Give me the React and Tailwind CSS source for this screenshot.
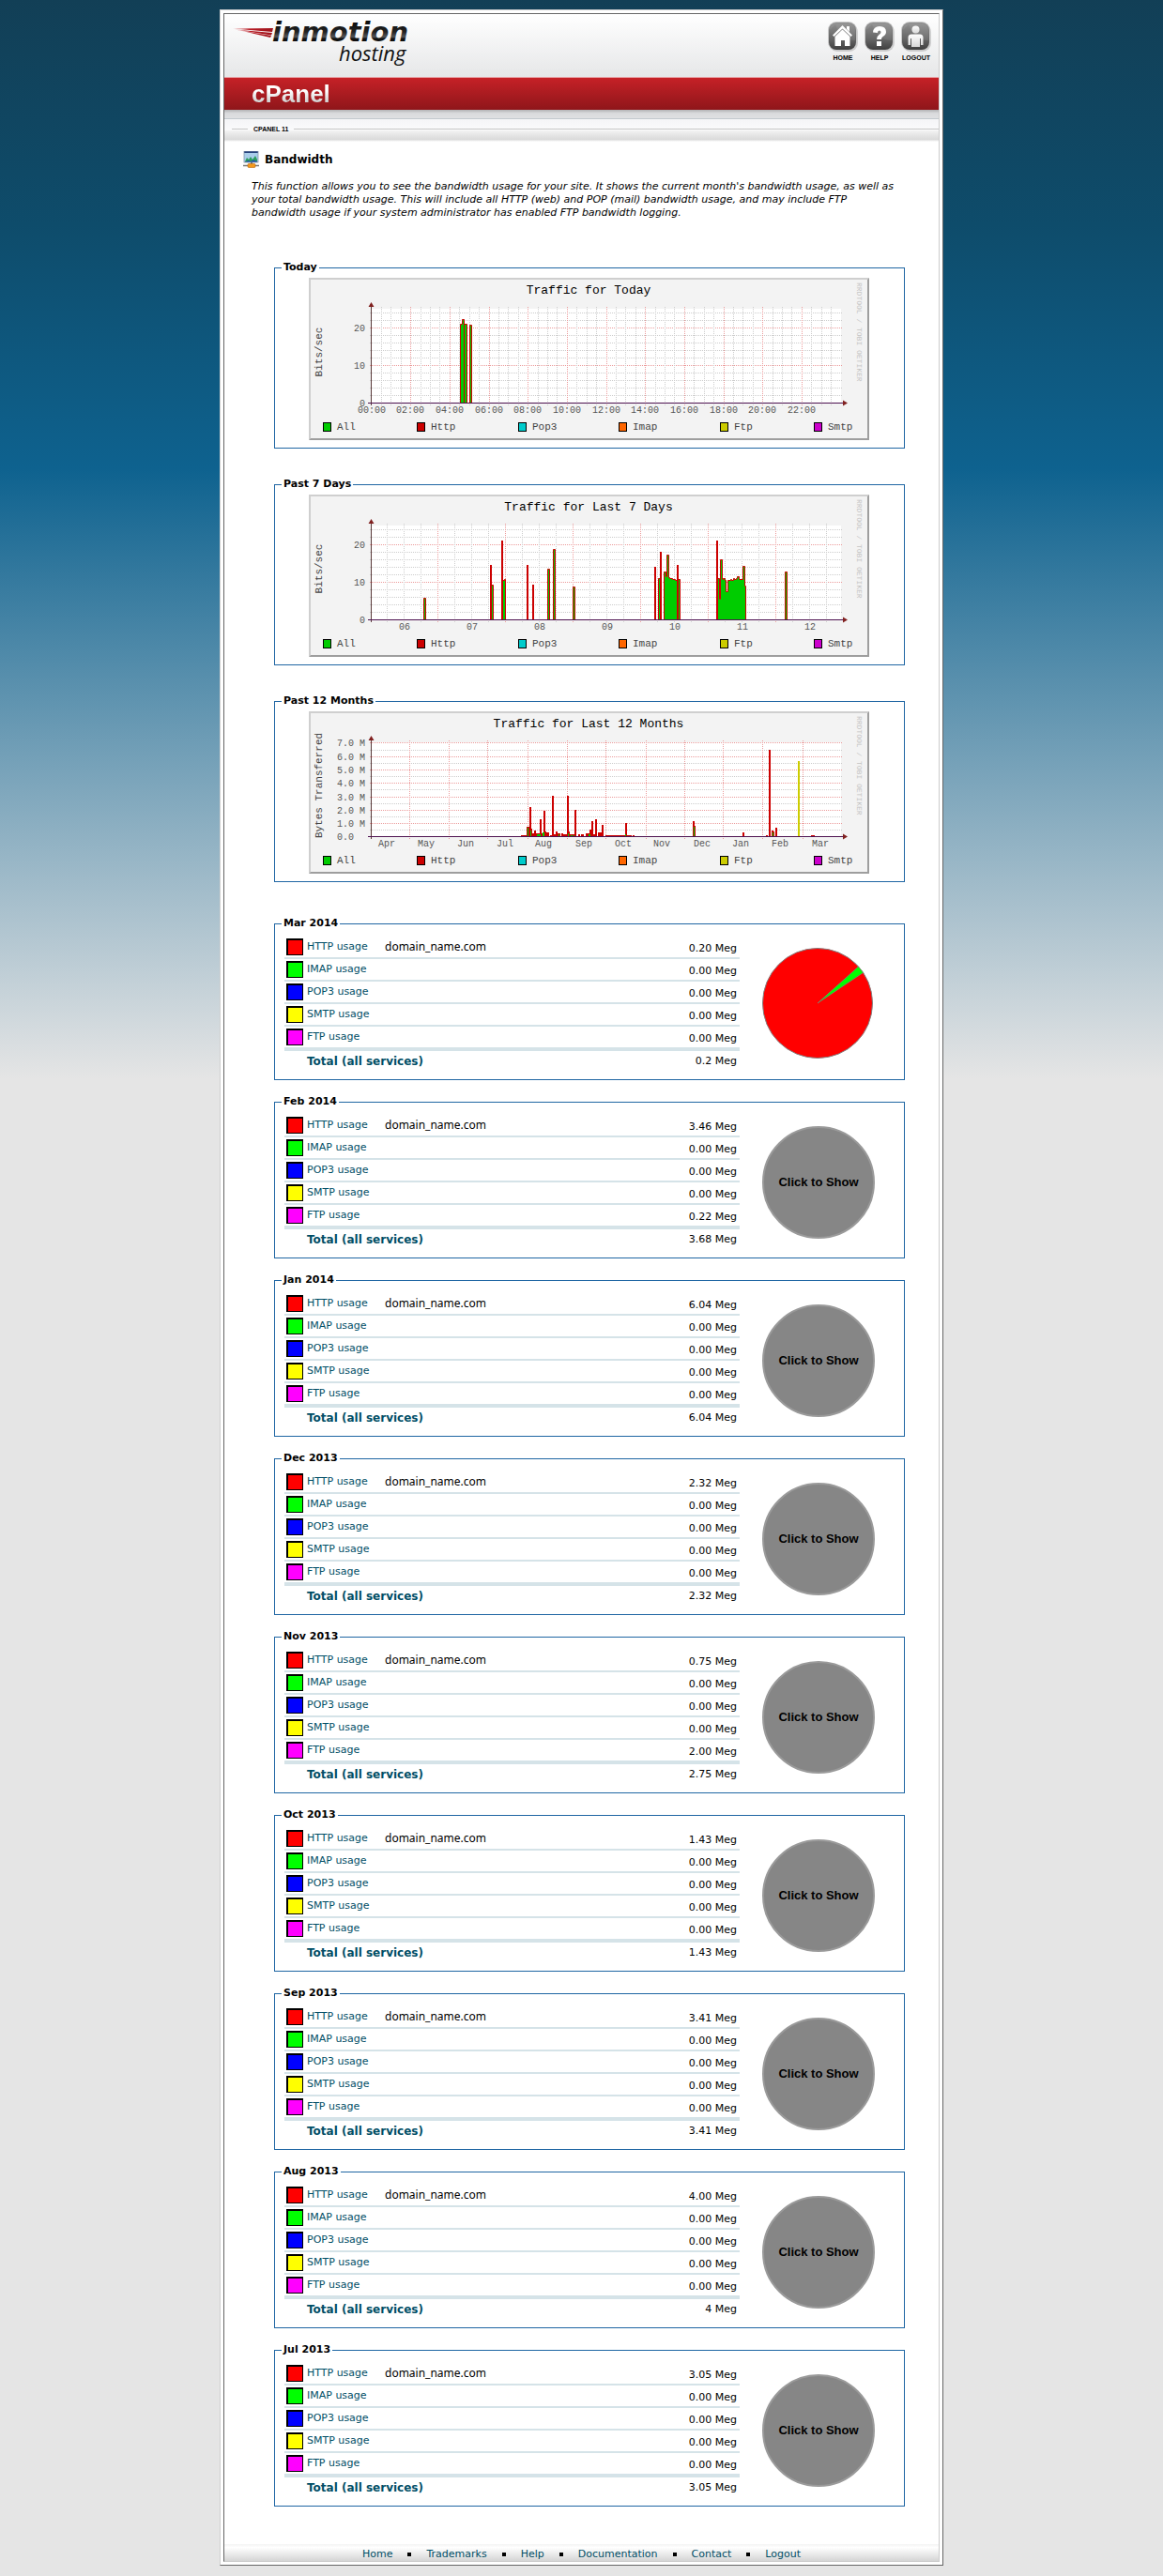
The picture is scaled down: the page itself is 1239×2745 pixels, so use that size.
import React from "react";

const SANS = "font-['DejaVu_Sans',Verdana,sans-serif]";

/* ---------- header artwork ---------- */

function Logo() {
  return (
    <svg viewBox="0 0 195 66" className="block h-[66px] w-[195px]" role="img" aria-label="InMotion Hosting">
      <defs>
        <linearGradient id="word" x1="0" y1="0" x2="0" y2="1">
          <stop offset="0" stopColor="#000" />
          <stop offset="0.5" stopColor="#222" />
          <stop offset="0.65" stopColor="#555" />
          <stop offset="0.72" stopColor="#111" />
          <stop offset="1" stopColor="#000" />
        </linearGradient>
        <linearGradient id="streak" x1="0" y1="0" x2="1" y2="0">
          <stop offset="0" stopColor="#c9202a" stopOpacity="0.35" />
          <stop offset="0.4" stopColor="#b81c25" />
          <stop offset="1" stopColor="#a0141c" />
        </linearGradient>
      </defs>
      <path d="M0 15.500 L43 15 L42 19 Z" fill="url(#streak)" />
      <path d="M2 16.500 L42 20 L41 22.500 Z" fill="url(#streak)" />
      <path d="M8 17.500 L41 23 L40 25 Z" fill="url(#streak)" />
      <text x="42" y="29" fontFamily="DejaVu Sans, sans-serif" fontWeight="700" fontStyle="italic" fontSize="29" fill="url(#word)">inmotion</text>
      <text x="113" y="50" fontFamily="Open Sans, sans-serif" fontWeight="400" fontStyle="italic" fontSize="22" fill="#111">hosting</text>
    </svg>
  );
}

function Tile({ children }) {
  return (
    <svg viewBox="0 0 32 32" className="block size-8" aria-hidden="true">
      <defs>
        <linearGradient id="tile" x1="0" y1="0" x2="0" y2="1">
          <stop offset="0" stopColor="#8f8f8f" />
          <stop offset="0.6" stopColor="#666" />
          <stop offset="1" stopColor="#3f3f3f" />
        </linearGradient>
        <linearGradient id="glyph" x1="0" y1="0" x2="0" y2="1">
          <stop offset="0" stopColor="#fff" />
          <stop offset="1" stopColor="#d8d8d8" />
        </linearGradient>
      </defs>
      <rect x="1" y="2" width="31" height="30" rx="9" fill="#000" opacity="0.15" />
      <rect x="0" y="0" width="31" height="31" rx="9" fill="#c9c9c9" />
      <rect x="1" y="1" width="29" height="29" rx="8" fill="url(#tile)" />
      <path d="M2 9 Q2 2 9 2 H22 Q29 2 29 9 V20 Q14 20 8 3 Z" fill="#fff" opacity="0.08" />
      {children}
    </svg>
  );
}

function HomeGlyph() {
  return (
    <Tile>
      <path d="M20 5 h3 v6 l-3 -3 Z" fill="#fff" />
      <path d="M15.500 4 L26 14.500 L24.500 16 L15.500 7.500 L6.500 16 L5 14.500 Z" fill="#fff" />
      <path d="M15.500 8.500 L23.500 16 V26 H18 V20 H14 V26 H7.500 V16 Z" fill="#fff" />
    </Tile>
  );
}

function HelpGlyph() {
  return (
    <Tile>
      <path d="M9 11.500 Q9.500 5 16 5 Q23 5 23 11 Q23 14 19.500 16 Q18 17 18 19 H13 Q13 15.500 15.500 14 Q17.500 12.800 17.500 11.300 Q17.500 9.500 15.800 9.500 Q14 9.500 13.800 12 Z" fill="#fff" />
      <rect x="13" y="21" width="5" height="5" fill="#fff" />
    </Tile>
  );
}

function UserGlyph() {
  return (
    <Tile>
      <circle cx="15.500" cy="8.500" r="4" fill="url(#glyph)" />
      <path d="M7.500 17 Q7.500 13.500 11 13.500 H20 Q23.500 13.500 23.500 17 V25 H21 V18 H20 V27 H11 V18 H10 V25 H7.500 Z" fill="url(#glyph)" />
    </Tile>
  );
}

function BandwidthIcon() {
  return (
    <svg viewBox="0 0 18 18" className="size-[18px]" aria-hidden="true">
      <rect x="1" y="0" width="15" height="12" fill="#a9cdea" />
      <rect x="1" y="0" width="15" height="2" fill="#27437d" />
      <path d="M2 11 L4 7 L6 9 L8 6 L10 9 L13 5 L15 9 V12 H2 Z" fill="#2a9d5c" />
      <path d="M2 12 L5 10 L8 11 L11 9.500 L15 11 V12 Z" fill="#1c4fa8" />
      <rect x="1" y="0" width="15" height="12" fill="none" stroke="#8494ab" strokeWidth="0.800" />
      <rect x="8" y="12" width="2" height="3" fill="#777" />
      <path d="M0 15.500 H17" stroke="#777" strokeWidth="1.500" />
      <rect x="5" y="13.500" width="8" height="4" rx="1" fill="#f59a1c" stroke="#b96a10" strokeWidth="0.600" />
    </svg>
  );
}

/* ---------- traffic charts ---------- */

const LEFT = 66.5;
const BASE = 133.5;
const MONO = "Liberation Mono, monospace";
const SERIES = [
  { name: "All", color: "#00cc00", x: 15 },
  { name: "Http", color: "#cc0000", x: 115 },
  { name: "Pop3", color: "#00cccc", x: 223 },
  { name: "Imap", color: "#ff6600", x: 330 },
  { name: "Ftp", color: "#cccc00", x: 438 },
  { name: "Smtp", color: "#cc00cc", x: 538 },
];

function Chart({ title, unit, rows, cols, labels, children }) {
  return (
    <svg viewBox="0 0 597 173" className="block h-auto w-full" role="img" aria-label={title}>
      <rect width="597" height="173" fill="#f3f3f3" />
      <path d="M0 0 H597 L595 2 H2 V171 L0 173 Z" fill="#cfcfcf" />
      <path d="M597 0 V173 H0 L2 171 H595 V2 Z" fill="#9e9e9e" />
      <rect x="66" y="33" width="501" height="101" fill="#fff" />
      <text x="298" y="17" textAnchor="middle" fontFamily={MONO} fontSize="13" fill="#000">{title}</text>
      <text transform="translate(14 79) rotate(-90)" textAnchor="middle" fontFamily={MONO} fontSize="11" fill="#444">{unit}</text>
      <text transform="translate(567 5) rotate(90)" y="-17" fontFamily={MONO} fontSize="8" fill="#c4c4c4">RRDTOOL / TOBI OETIKER</text>
      <g strokeWidth="1" strokeDasharray="1 1">
        {rows.map((r) => (
          <path key={r.y} d={`M65 ${r.y} H569`} stroke={r.major ? "#ec9c9c" : "#cdcdcd"} />
        ))}
        {cols.map((c) => (
          <path key={c.x} d={`M${c.x} 31 V136`} stroke={c.major ? "#ec9c9c" : "#cdcdcd"} />
        ))}
      </g>
      {children}
      <path d={`M${LEFT} 30 V136`} stroke="#5a3a3a" />
      <path d={`M63 ${BASE} H570`} stroke="#4d1250" />
      <path d="M66.500 26 L69.500 31 H63.500 Z M574 133.500 L569 130.500 V136.500 Z" fill="#80201f" />
      <g fontFamily={MONO} fontSize="10" fill="#555">
        {rows.filter((r) => r.label).map((r) => (
          <text key={r.y} x="60" y={r.y + 3} textAnchor="end" xmlSpace="preserve">{r.label}</text>
        ))}
        {labels.map((l) => (
          <text key={l.x} x={l.x} y="144" textAnchor="middle">{l.text}</text>
        ))}
      </g>
      {SERIES.map((s) => (
        <g key={s.name}>
          <rect x={s.x + 0.5} y="154.500" width="8" height="9" fill={s.color} stroke="#000" />
          <text x={s.x + 15} y="162" fontFamily={MONO} fontSize="11" fill="#444">{s.name}</text>
        </g>
      ))}
    </svg>
  );
}

/* Each run is a list of [xStart, yTop] steps closed by an end x. */
function Steps({ runs }) {
  return runs.map(({ end, pts }, i) => {
    let d = `M${pts[0][0] + 0.5} ${BASE}`;
    pts.forEach(([x, y], j) => {
      const next = j + 1 < pts.length ? pts[j + 1][0] : end;
      d += ` V${y + 0.5} H${next + 0.5}`;
    });
    d += ` V${BASE}`;
    return <path key={i} d={d} fill="#00cc00" stroke="#cc0000" />;
  });
}

function Spikes({ data, color = "#cc0000" }) {
  return data.map(([x, top, w = 2], i) => (
    <rect key={i} x={x} y={top} width={w} height={134 - top} fill={color} />
  ));
}

const bitRows = Array.from({ length: 12 }, (_, i) => {
  const v = (i + 1) * 2;
  return { y: BASE - v * 4, major: v % 10 === 0, label: v % 10 === 0 ? String(v) : null };
}).concat({ y: BASE, label: "0" });

const byteRows = Array.from({ length: 15 }, (_, i) => ({
  y: Math.round(BASE - i * 7.143) + 0.5 - (i === 0 ? 1 : 0),
  major: i % 2 === 0,
  label: i % 2 ? null : i === 0 ? "0.0\u00a0\u00a0" : `${i / 2}.0 M`,
}));

const dayCols = Array.from({ length: 47 }, (_, i) => ({
  x: Math.round(LEFT + (i + 1) * 10.417) + 0.5,
  major: i % 4 === 3,
}));
const dayLabels = Array.from({ length: 12 }, (_, i) => ({
  x: Math.round(LEFT + i * 41.667),
  text: `${String(i * 2).padStart(2, "0")}:00`,
}));

const weekCols = Array.from({ length: 27 }, (_, i) => ({ x: 83.5 + i * 18, major: i % 4 === 3 }));
const weekLabels = ["06", "07", "08", "09", "10", "11", "12"].map((text, i) => ({ x: 102 + i * 72, text }));
const weekRuns = [
  { end: 124, pts: [[122, 110]] },
  { end: 196, pts: [[193, 75], [194, 96]] },
  { end: 209, pts: [[205, 49], [206, 91], [208, 90]] },
  { end: 256, pts: [[254, 79]] },
  { end: 262, pts: [[260, 58]] },
  { end: 283, pts: [[281, 98]] },
  { end: 375, pts: [[372, 89], [374, 61]] },
  { end: 395, pts: [[378, 82], [380, 87], [381, 64], [383, 88], [384, 89], [387, 90], [390, 91], [392, 75], [393, 90]] },
  {
    end: 465,
    pts: [[434, 49], [435, 89], [437, 111], [438, 69], [440, 90], [441, 89], [443, 91], [444, 103], [446, 91], [449, 90], [450, 91], [452, 89], [453, 90], [455, 89], [456, 87], [458, 90], [462, 76], [464, 97]],
  },
  { end: 509, pts: [[507, 82]] },
];
const weekSpikes = [[193, 75], [205, 49], [232, 75], [238, 96], [368, 77], [374, 61], [392, 75], [434, 49]];

const yearCols = [107.5, 149.5, 190.5, 233.5, 275.5, 316.5, 359.5, 400.5, 441.5, 483.5, 526.5].map((x) => ({ x, major: true }));
const yearLabels = [
  ["Apr", 83], ["May", 125], ["Jun", 167], ["Jul", 209], ["Aug", 250], ["Sep", 293],
  ["Oct", 335], ["Nov", 376], ["Dec", 419], ["Jan", 460], ["Feb", 502], ["Mar", 545],
].map(([text, x]) => ({ text, x }));
const yearSpikes = [
  [226, 132, 7], [232, 123, 3], [235, 102], [236, 125], [238, 130], [240, 127], [242, 130, 4], [246, 115], [248, 130],
  [250, 106], [251, 128], [253, 129, 3], [257, 132, 2], [259, 90], [261, 131], [263, 128], [265, 130, 3], [269, 130],
  [271, 131, 4], [275, 90], [276, 128], [278, 131, 6], [283, 105], [287, 131], [290, 131, 3], [295, 130, 4],
  [299, 126], [301, 117], [303, 131], [305, 115], [308, 129, 4], [312, 121],
  [316, 132, 28], [337, 119], [345, 132], [409, 117], [410, 122], [462, 129], [487, 132], [490, 41], [493, 127],
  [495, 128, 1], [497, 124], [535, 132, 4],
];
const yearGreens = [[233, 124, 1], [236, 127, 1], [243, 131, 4], [249, 129, 2], [266, 131, 1], [276, 130, 1], [279, 132, 2], [282, 132, 1], [298, 131, 2], [337, 131, 1], [410, 123, 1], [494, 129, 1]];

/* ---------- panels ---------- */

function Panel({ title, className = "", children }) {
  return (
    <fieldset className={`min-w-0 border border-[#1f66a3] ${className}`}>
      <legend className="ml-[7px] px-0.5 text-[11px] leading-[14px] font-bold text-black">{title}</legend>
      {children}
    </fieldset>
  );
}

function ChartPanel({ title, children }) {
  return (
    <Panel title={title}>
      <div className="pt-1 pr-[37px] pb-2 pl-9">{children}</div>
    </Panel>
  );
}

const SERVICES = [
  ["HTTP usage", "bg-[#ff0000]"],
  ["IMAP usage", "bg-[#00ff00]"],
  ["POP3 usage", "bg-[#0000ff]"],
  ["SMTP usage", "bg-[#ffff00]"],
  ["FTP usage", "bg-[#ff00ff]"],
];

const MONTHS = [
  ["Mar 2014", "0.20", "0.00", "0.2"],
  ["Feb 2014", "3.46", "0.22", "3.68"],
  ["Jan 2014", "6.04", "0.00", "6.04"],
  ["Dec 2013", "2.32", "0.00", "2.32"],
  ["Nov 2013", "0.75", "2.00", "2.75"],
  ["Oct 2013", "1.43", "0.00", "1.43"],
  ["Sep 2013", "3.41", "0.00", "3.41"],
  ["Aug 2013", "4.00", "0.00", "4"],
  ["Jul 2013", "3.05", "0.00", "3.05"],
];

function Pie() {
  return (
    <svg viewBox="0 0 120 120" className="size-[120px]" role="img" aria-label="Usage by service">
      <circle cx="59" cy="59" r="58.500" fill="#ff0000" stroke="#808080" />
      <path d="M59 59 L102.500 20 L107.500 26.500 Z" fill="#00ff00" stroke="#808080" strokeWidth="0.700" />
    </svg>
  );
}

function MonthPanel({ month, http, ftp, total, open }) {
  const values = [http, "0.00", "0.00", "0.00", ftp];
  return (
    <Panel title={month}>
      <div className="flex items-center pt-[7px] pr-[7px] pb-2 pl-2.5">
        <table className="w-[485px] max-w-full shrink border-separate border-spacing-0 text-[11px] leading-[14px]">
          <tbody>
            {SERVICES.map(([name, color], i) => (
              <tr key={name} className={i === 4 ? "h-[26px] *:border-b-4 *:border-[#d5e3e8]" : "h-6 *:border-b-2 *:border-[#d5e3e8]"}>
                <td className="w-6 p-0 pl-0.5 align-middle">
                  <span className={`block size-[18px] border-t-2 border-r border-b border-l-2 border-black ${color}`} />
                </td>
                <td className="w-[83px] p-0 align-middle whitespace-nowrap">
                  <a href="#usage" className="text-[#004e66]">{name}</a>
                </td>
                <td className="p-0 align-middle font-['Noto_Sans',sans-serif] text-[12px] text-black">{i === 0 ? "domain_name.com" : ""}</td>
                <td className="p-0 pt-1 pr-[3px] text-right align-middle whitespace-nowrap text-black">{values[i]} Meg</td>
              </tr>
            ))}
            <tr className="h-[22px]">
              <td className="p-0" />
              <td className="p-0 align-middle text-[12px] font-bold whitespace-nowrap text-[#004e66]" colSpan={2}>Total (all services)</td>
              <td className="p-0 pr-[3px] text-right align-middle whitespace-nowrap text-black">{total} Meg</td>
            </tr>
          </tbody>
        </table>
        <div className="flex flex-1 justify-center">
          {open ? (
            <Pie />
          ) : (
            <button type="button" className="size-[120px] shrink-0 rounded-full border-2 border-[#9a9a9a] bg-[#868686] p-0 font-['Liberation_Sans',Arial,sans-serif] text-[13px] font-bold whitespace-nowrap text-black">
              Click to Show
            </button>
          )}
        </div>
      </div>
    </Panel>
  );
}

const NAV = [["Home", HomeGlyph], ["Help", HelpGlyph], ["Logout", UserGlyph]];
const FOOTER = ["Home", "Trademarks", "Help", "Documentation", "Contact", "Logout"];

export default function App() {
  return (
    <div className={`min-h-screen bg-[#e5e5e5] bg-[linear-gradient(180deg,#123f56_0px,#0e4c6b_240px,#0e628f_500px,#e5e5e5_1150px)] py-2.5 text-black ${SANS}`}>
      <div className="mx-auto max-w-[771px] border border-t-[#cfcfcf] border-r-[#666] border-b-[#666] border-l-[#cfcfcf] bg-white p-[3px]">
        <div className="border border-t-[#666] border-r-[#ccc] border-b-[#ccc] border-l-[#666]">
          <header>
            <div className="flex h-[67px] items-start justify-between bg-linear-to-b from-white to-[#e6e7e8] pr-2 pl-[9px]">
              <Logo />
              <nav className="flex gap-[7px] pt-2">
                {NAV.map(([name, Glyph]) => (
                  <a key={name} href={`#${name.toLowerCase()}`} className="flex w-8 flex-col items-center gap-0.5 font-['Liberation_Sans',Arial,sans-serif] text-[7px] leading-[9px] font-bold text-black uppercase">
                    <Glyph />
                    {name}
                  </a>
                ))}
              </nav>
            </div>
            <div className="h-[35px] border-t border-[#e8a0a3] bg-linear-to-b from-[#c62127] to-[#8f161a] pl-[29px] font-['Liberation_Sans',Arial,sans-serif] text-[26px] leading-[34px] font-bold">
              <span className="bg-linear-to-b from-white from-40% to-[#cfcfcf] to-80% bg-clip-text text-transparent">cPanel</span>
            </div>
            <div className="h-[10px] border-b border-[#c3c9ce] bg-linear-to-b from-[#b3b3b5] via-[#d9dadc] via-40% to-[#dfe0e2]" />
            <div className="flex h-5 items-center gap-1.5 bg-linear-to-b from-[#f5f5f7] to-white pl-2 font-['Liberation_Sans',Arial,sans-serif] text-[7px] leading-none font-bold">
              <span className="h-px w-[17px] bg-[#c6c6c6]" />
              <span>CPANEL 11</span>
              <span className="h-px flex-1 bg-[#c6c6c6]" />
            </div>
            <div className="-mt-2 h-3 bg-linear-to-b from-[#f3f3f3] via-[#dadada] via-80% to-white" />
          </header>

          <main className="pr-9 pb-10 pl-[53px]">
            <h1 className="-ml-[33px] flex items-center gap-[5px] pt-2.5 text-[12px] leading-[18px] font-bold">
              <BandwidthIcon />
              Bandwidth
            </h1>
            <p className="-mr-4 -ml-6 pt-[13px] text-[11px] leading-[14px] italic">
              This function allows you to see the bandwidth usage for your site. It shows the current month's bandwidth usage, as well as
              <br />
              your total bandwidth usage. This will include all HTTP (web) and POP (mail) bandwidth usage, and may include FTP
              <br />
              bandwidth usage if your system administrator has enabled FTP bandwidth logging.
            </p>

            <section className="flex flex-col gap-[31px] pt-[44px]">
              <ChartPanel title="Today">
                <Chart title="Traffic for Today" unit="Bits/sec" rows={bitRows} cols={dayCols} labels={dayLabels}>
                  <Steps
                    runs={[
                      { end: 168, pts: [[161, 49], [163, 44], [165, 49]] },
                      { end: 173, pts: [[171, 50]] },
                    ]}
                  />
                  <path d="M165.500 49 V133" stroke="#cc0000" />
                </Chart>
              </ChartPanel>
              <ChartPanel title="Past 7 Days">
                <Chart title="Traffic for Last 7 Days" unit="Bits/sec" rows={bitRows} cols={weekCols} labels={weekLabels}>
                  <Steps runs={weekRuns} />
                  <Spikes data={weekSpikes} />
                </Chart>
              </ChartPanel>
              <ChartPanel title="Past 12 Months">
                <Chart title="Traffic for Last 12 Months" unit="Bytes Transferred" rows={byteRows} cols={yearCols} labels={yearLabels}>
                  <Spikes data={yearSpikes} />
                  <Spikes data={yearGreens} color="#00cc00" />
                  <Spikes data={[[521, 53]]} color="#cccc00" />
                </Chart>
              </ChartPanel>
            </section>

            <section className="flex flex-col gap-4 pt-[37px]">
              {MONTHS.map(([month, http, ftp, total], i) => (
                <MonthPanel key={month} month={month} http={http} ftp={ftp} total={total} open={i === 0} />
              ))}
            </section>
          </main>

          <footer className="flex h-[18px] items-end justify-center gap-4 bg-linear-to-b from-[#f3f3f3] via-white via-20% to-[#d5d5d5] text-[11px] leading-[14px]">
            {FOOTER.map((name, i) => (
              <React.Fragment key={name}>
                {i > 0 && <span className="mb-[5px] size-1 bg-black" />}
                <a href={`#${name.toLowerCase()}`} className="text-[#004e66]">{name}</a>
              </React.Fragment>
            ))}
          </footer>
        </div>
      </div>
    </div>
  );
}
